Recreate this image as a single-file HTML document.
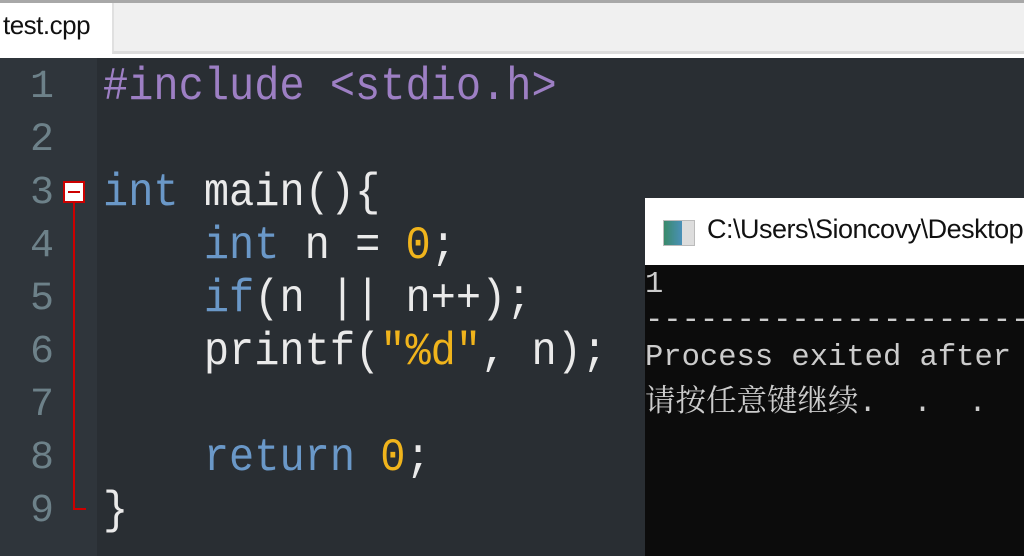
<!DOCTYPE html>
<html><head><meta charset="utf-8"><style>
body{margin:0;width:1024px;height:556px;overflow:hidden;background:#292e33;position:relative;font-family:"Liberation Sans",sans-serif}
.top{position:absolute;left:0;top:0;width:1024px;height:3px;background:#a8a8a8}
.tabbar{position:absolute;left:0;top:3px;width:1024px;height:55px;background:#fff}
.tabrest{position:absolute;left:112px;top:3px;width:912px;height:48px;background:#f0f0f0;border-bottom:3px solid #dcdcdc;border-left:2px solid #e0e0e0}
.tab{position:absolute;left:3px;top:10px;font-size:26px;color:#111;letter-spacing:-0.5px}
.gutter{position:absolute;left:0;top:58px;width:97px;height:498px;background:#2f353b}
.ln{position:absolute;left:0;width:54px;text-align:right;color:#6d8189;font-family:"Liberation Mono",monospace;font-size:40px;line-height:40px}
.l{position:absolute;left:103px;white-space:pre;font-family:"Liberation Mono",monospace;font-size:42px;color:#eaeaea;transform:scaleY(1.1);transform-origin:0 50%}
.k{color:#6a98c8}.p{color:#9d7fc4}.n{color:#f0b41c}
.fold{position:absolute;left:63px;top:181px;width:18px;height:18px;border:2px solid #c00;background:#fff}
.fold:after{content:"";position:absolute;left:3px;top:8px;width:12px;height:2px;background:#c00}
.vl{position:absolute;left:73px;top:203px;width:2px;height:307px;background:#c00}
.hl{position:absolute;left:73px;top:508px;width:13px;height:2px;background:#c00}
.con{position:absolute;left:645px;top:198px;width:379px;height:358px;background:#0c0c0c;overflow:hidden}
.ct{position:absolute;left:0;top:0;width:379px;height:67px;background:#fff;overflow:hidden}
.ico{position:absolute;left:18px;top:22px;width:30px;height:24px;border:1px solid #bbb;background:linear-gradient(90deg,#3a8a6a 0,#4a90b8 60%,#ddd 60%)}
.ctt{position:absolute;left:62px;top:16px;font-size:27px;color:#111;white-space:nowrap;letter-spacing:-0.5px}
.cl{position:absolute;left:0;white-space:pre;font-family:"Liberation Mono","Noto Serif CJK SC",monospace;font-size:30.5px;color:#cccccc}
</style></head><body>
<div class="top"></div>
<div class="tabbar"></div><div class="tabrest"></div>
<div class="tab">test.cpp</div>
<div class="gutter"></div>
<div class="ln" style="top:68px">1</div>
<div class="ln" style="top:121px">2</div>
<div class="ln" style="top:174px">3</div>
<div class="ln" style="top:227px">4</div>
<div class="ln" style="top:280px">5</div>
<div class="ln" style="top:333px">6</div>
<div class="ln" style="top:386px">7</div>
<div class="ln" style="top:439px">8</div>
<div class="ln" style="top:492px">9</div>
<div class="fold"></div><div class="vl"></div><div class="hl"></div>
<div class="l" style="top:63px"><span class="p">#include &lt;stdio.h&gt;</span></div>
<div class="l" style="top:169px"><span class="k">int</span> main(){</div>
<div class="l" style="top:222px">    <span class="k">int</span> n = <span class="n">0</span>;</div>
<div class="l" style="top:275px">    <span class="k">if</span>(n || n++);</div>
<div class="l" style="top:328px">    printf(<span class="n">"%d"</span>, n);</div>
<div class="l" style="top:434px">    <span class="k">return</span> <span class="n">0</span>;</div>
<div class="l" style="top:487px">}</div>
<div class="con">
<div class="ct"><div class="ico"></div><div class="ctt">C:\Users\Sioncovy\Desktop</div></div>
<div class="cl" style="top:70px">1</div>
<div class="cl" style="top:106px">--------------------------------</div>
<div class="cl" style="top:143px">Process exited after</div>
<div class="cl" style="top:178px">请按任意键继续.  .  .</div>
</div>
</body></html>
